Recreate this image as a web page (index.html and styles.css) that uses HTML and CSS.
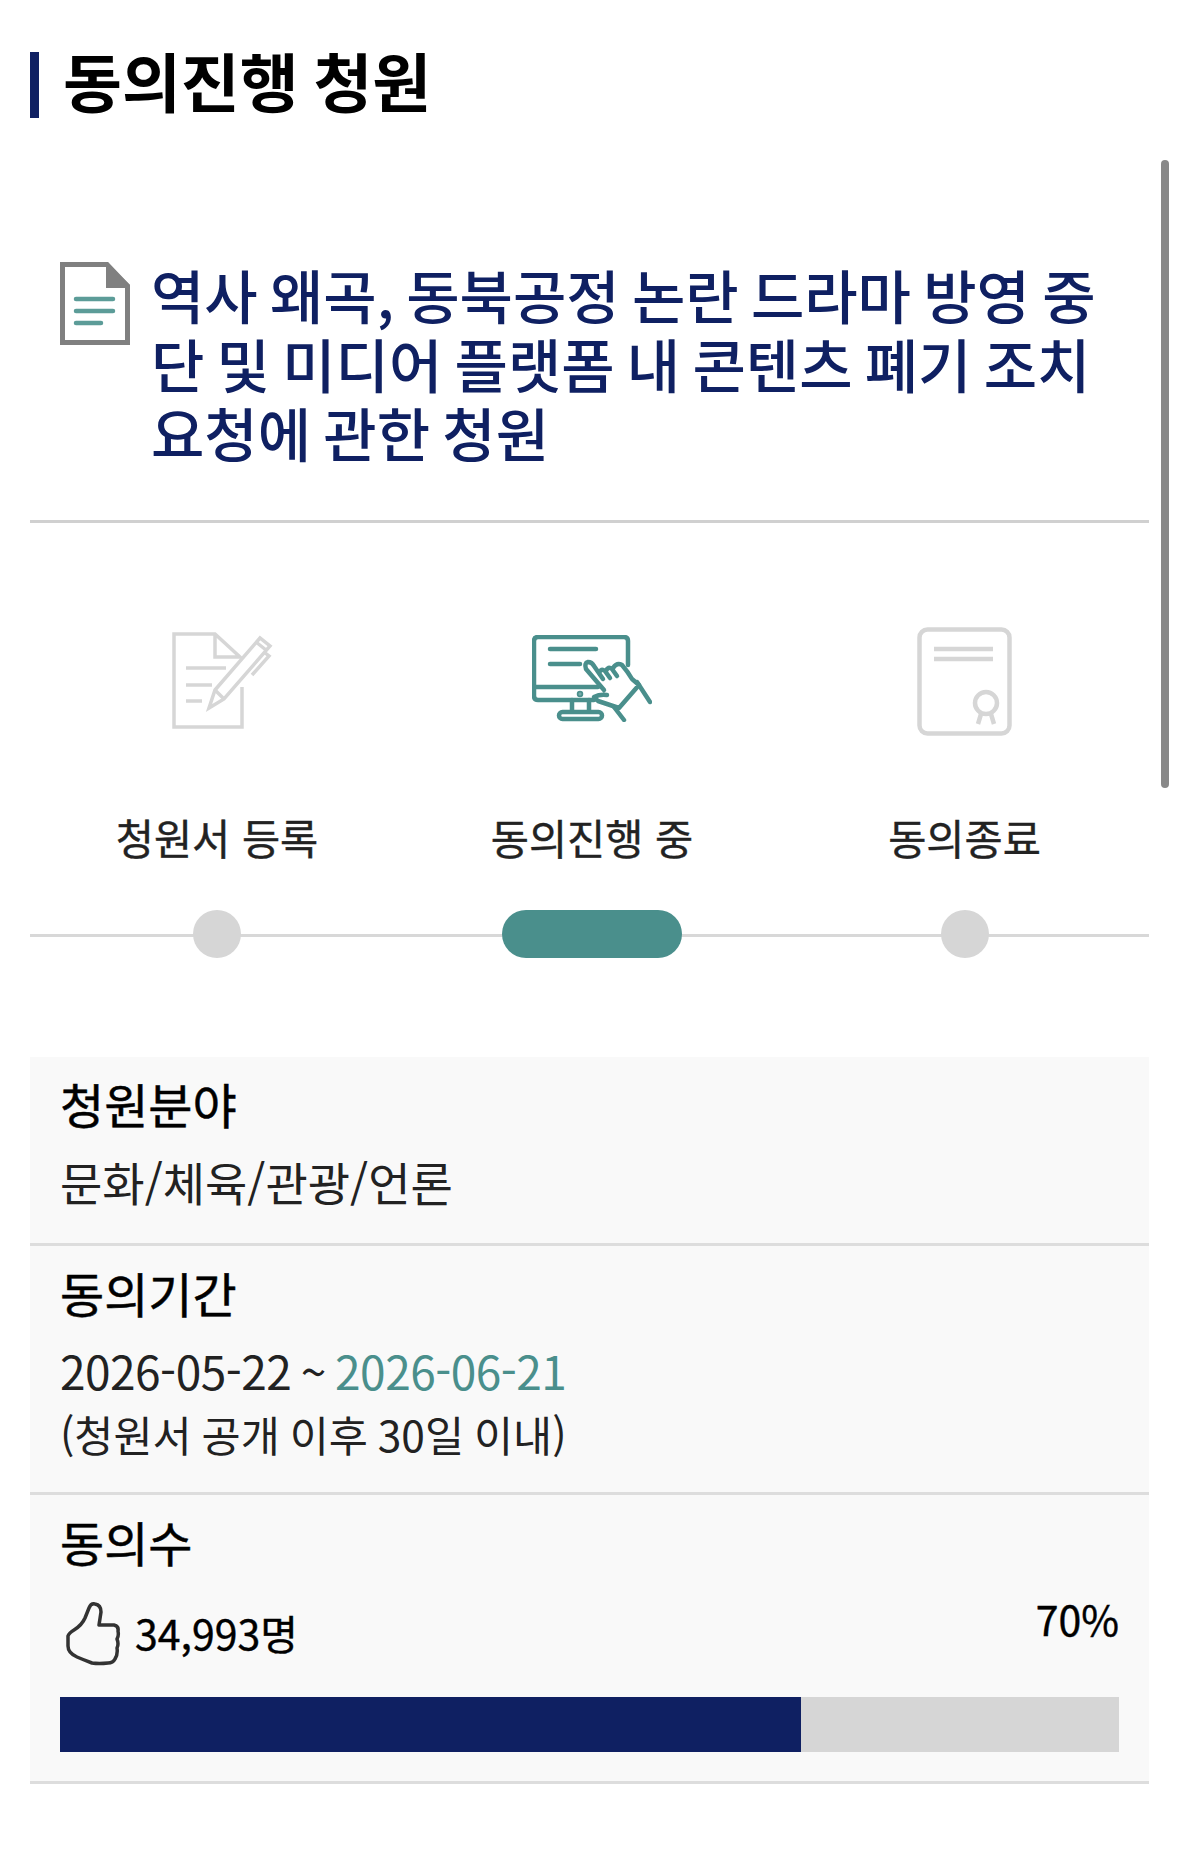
FILE: index.html

```html
<!DOCTYPE html>
<html lang="ko">
<head>
  <meta charset="UTF-8" />
  <meta name="viewport" content="width=device-width, initial-scale=1" />
  <title>동의진행 청원</title>
  <link rel="stylesheet" href="styles.css">
</head>
<body>
  <div class="scrollbar"></div>
  <div class="page">
    <h1 class="page-title"><span>동의진행 청원</span></h1>

    <div class="petition-title">
      <svg class="doc-icon" viewBox="0 0 70 83">
        <path d="M2.5 2.5H47L67.5 24V80.5H2.5Z" fill="#fff" stroke="#808080" stroke-width="5"/>
        <path d="M46 0L70 23V26H46Z" fill="#808080"/>
        <path d="M16 37H53M16 49H53M16 61H41" stroke="#5c9c98" stroke-width="4.5" stroke-linecap="round"/>
      </svg>
      <h2>역사 왜곡, 동북공정 논란 드라마 방영 중단 및 미디어 플랫폼 내 콘텐츠 폐기 조치 요청에 관한 청원</h2>
    </div>

    <div class="steps">
      <div class="step first">
        <div class="step-icon">
          <svg width="101" height="97" viewBox="0 0 101 97" fill="none" stroke="#d6d6d6" stroke-width="3.5">
            <path d="M70 55V95H2V2H43L68 25H43V2"/>
            <path d="M14 36H54M14 53H40M14 69H30"/>
            <path d="M37 76L43 58L88 6L98 14L52 67Z"/>
            <path d="M43 58L52 67M84 10L94 18M80 43L97 24L92 20"/>
          </svg>
        </div>
        <div class="step-label">청원서 등록</div>
      </div>
      <div class="step second">
        <div class="step-icon">
          <svg width="120" height="87" viewBox="0 0 120 87" fill="none" stroke="#4a8f8c" stroke-width="4.5" stroke-linecap="round" stroke-linejoin="round">
            <path d="M62 65H6Q2 65 2 61V6Q2 2 6 2H92Q96 2 96 6V30"/>
            <path d="M2 52H66M18 14H64M18 29H48"/>
            <path d="M40 65V76M57 65V76"/>
            <rect x="27" y="77" width="43" height="7" rx="3.5"/>
            <circle cx="48" cy="59" r="1" fill="#4a8f8c"/>
            <path d="M72 55L54 34Q52 28 56 27Q60 27 62 31L71 44M67 38Q69 33 73 36L78 43M74 36Q76 31 80 34L85 41M81 33Q85 27 90 30Q96 37 100 44L107 50L87 73L66 66L62 62Q68 59 75 60"/>
            <path d="M105 47L118 67M82 72L92 85"/>
          </svg>
        </div>
        <div class="step-label">동의진행 중</div>
      </div>
      <div class="step third">
        <div class="step-icon">
          <svg width="95" height="109" viewBox="0 0 95 109" fill="none" stroke="#d6d6d6" stroke-width="4.5">
            <rect x="2.5" y="2.5" width="90" height="104" rx="8"/>
            <path d="M17 22H76M17 32H76"/>
            <circle cx="69" cy="76" r="11"/>
            <path d="M64 87L61 97M74 87L77 97"/>
          </svg>
        </div>
        <div class="step-label">동의종료</div>
      </div>
    </div>

    <div class="track">
      <span class="dot"></span>
      <span class="dot active"></span>
      <span class="dot"></span>
    </div>

    <div class="info">
      <div class="info-row">
        <div class="info-label">청원분야</div>
        <div class="info-value">문화/체육/관광/언론</div>
      </div>
      <div class="info-row period">
        <div class="info-label">동의기간</div>
        <div class="info-value">2026-05-22 ~ <span class="end-date">2026-06-21</span></div>
        <div class="info-note">(청원서 공개 이후 30일 이내)</div>
      </div>
      <div class="info-row count">
        <div class="info-label">동의수</div>
        <div class="count-line">
          <div class="count-left">
            <svg class="thumb" viewBox="0 0 55 64" fill="none" stroke="#333" stroke-width="3.5" stroke-linejoin="round">
              <path d="M2 34Q3 31 8 28Q16 23 19 16L23 6Q25 1 29 2Q35 3 35 10L33 23H48Q53 24 52 29Q53 34 51 37Q53 42 51 46Q52 52 49 57Q47 61 42 61Q33 62 26 61Q18 58 11 55Q2 51 2 44Z"/>
            </svg>
            <span class="count-num">34,993명</span>
          </div>
          <span class="count-pct">70%</span>
        </div>
        <div class="bar"><div class="bar-fill" style="width: 70%"></div></div>
      </div>
    </div>
  </div>
</body>
</html>
```

FILE: styles.css

```css
body {
  margin: 0;
  padding: 0;
  background: #fff;
  color: #000;
  font-family: "Noto Sans CJK KR", "Noto Sans", sans-serif;
}
.page {
  padding: 52px 30px 0;
}
.scrollbar {
  position: absolute;
  left: 1161px;
  top: 160px;
  width: 8px;
  height: 628px;
  border-radius: 4px;
  background: #888;
}
.page-title {
  margin: 0;
  padding-left: 24px;
  border-left: 9px solid #0f2062;
  height: 66px;
  font-size: 64px;
  line-height: 54px;
  font-weight: 700;
  word-spacing: -3px;
}
.petition-title {
  display: flex;
  gap: 21px;
  margin-top: 142px;
  padding: 0 30px 53px;
  border-bottom: 3px solid #d0d0d0;
}
.doc-icon {
  flex: none;
  width: 70px;
  height: 83px;
  margin-top: 2px;
}
.petition-title h2 {
  margin: 0;
  width: 998px;
  color: #0f2062;
  font-size: 58px;
  line-height: 69px;
  font-weight: 500;
  word-spacing: -4px;
}
.steps {
  display: grid;
  grid-template-columns: 374px 376px 369px;
  margin-top: 103px;
}
.step {
  text-align: center;
}
.step-icon {
  display: flex;
  align-items: center;
  justify-content: center;
  height: 110px;
}
.first .step-icon {
  padding: 0 0 2px 10px;
  height: 108px;
}
.second .step-icon {
  padding-bottom: 5px;
  height: 105px;
}
.step-label {
  margin-top: 73px;
  color: #222;
  font-size: 41.5px;
  line-height: 56px;
  -webkit-text-stroke: 0.4px #222;
}
.track {
  position: relative;
  display: grid;
  grid-template-columns: 374px 376px 369px;
  justify-items: center;
  align-items: center;
  height: 48px;
  margin-top: 45px;
}
.track::before {
  content: "";
  position: absolute;
  left: 0;
  right: 0;
  top: 24px;
  height: 3px;
  background: #d8d8d8;
}
.dot {
  position: relative;
  width: 48px;
  height: 48px;
  border-radius: 50%;
  background: #d6d6d6;
}
.dot.active {
  width: 180px;
  border-radius: 24px;
  background: #4a8f8c;
}
.info {
  margin-top: 99px;
  background: #f9f9f9;
}
.info-row {
  padding: 18px 30px 32px;
  border-bottom: 3px solid #ddd;
}
.info-label {
  font-size: 48px;
  line-height: 56px;
  -webkit-text-stroke: 0.5px #000;
}
.info-value {
  margin-top: 20px;
  color: #222;
  font-size: 46px;
  line-height: 60px;
}
.end-date {
  color: #4a8f8c;
}
.info-note {
  margin-top: 4px;
  color: #222;
  font-size: 42.5px;
  line-height: 60px;
  word-spacing: -2px;
}
.period {
  padding-bottom: 28px;
}
.period .info-value {
  letter-spacing: -0.5px;
  word-spacing: -3px;
}
.count {
  padding-bottom: 29px;
}
.count-line {
  display: flex;
  justify-content: space-between;
  align-items: flex-start;
  margin-top: 19px;
}
.count-left {
  display: flex;
  align-items: center;
  gap: 14px;
  padding: 14px 0 0 6px;
}
.thumb {
  width: 55px;
  height: 64px;
}
.count-num,
.count-pct {
  font-size: 41px;
  line-height: 60px;
  -webkit-text-stroke: 0.4px #000;
}
.count-num {
  margin-top: -4px;
}
.bar {
  height: 55px;
  margin-top: 31px;
  background: #d6d6d6;
}
.bar-fill {
  height: 100%;
  background: #0f2062;
}
```
